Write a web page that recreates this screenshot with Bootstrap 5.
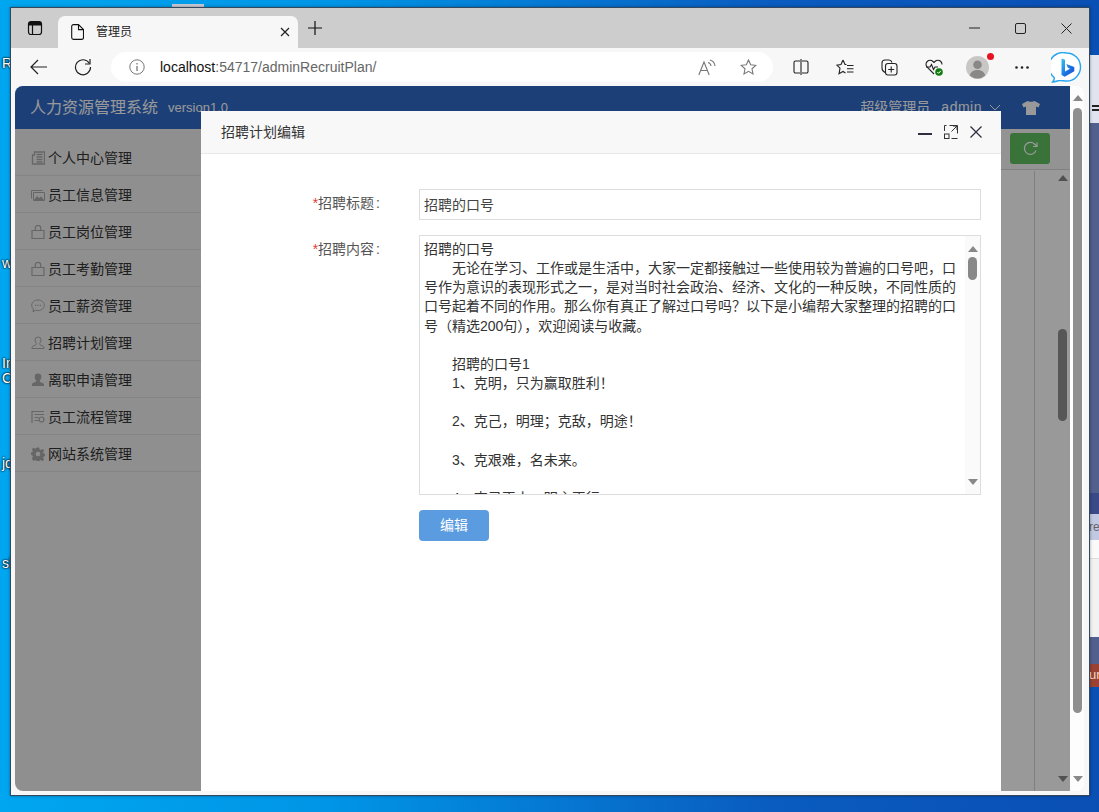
<!DOCTYPE html>
<html lang="zh-CN">
<head>
  <meta charset="UTF-8">
  <title>管理员</title>
  <link href="https://cdn.jsdelivr.net/npm/bootstrap@5.3.0/dist/css/bootstrap.min.css" rel="stylesheet">
  <style>
    html, body { height: 100%; }
    body {
      position: relative; overflow: hidden; width: 1099px; height: 812px;
      background: linear-gradient(90deg, #00a6f0 0, #0095e6 30%, #0a5cc0 70%, #0a4fb4 100%);
      font-family: "Liberation Sans", "Noto Sans CJK SC", sans-serif; font-size: 14px; color: #333;
    }
    svg { display: block; }

    /* desktop behind the window */
    .desk-label { position: absolute; left: 2px; color: #fff; font-size: 14px; line-height: 16px; text-shadow: 0 0 2px #000, 0 0 2px #000; }
    .desk-peek { position: absolute; left: 1089px; top: 55px; width: 10px; }
    .peek-a { height: 68px; background: #e0e4ee; padding: 50px 0 0 3px; }
    .peek-a i { display: block; width: 7px; height: 6px; border-top: 2px solid #222; border-bottom: 2px solid #222; }
    .peek-b { height: 370px; background: #52608f; }
    .peek-c { height: 21px; background: #3a4a88; }
    .peek-d { height: 26px; background: #c0c8e2; color: #666; font-size: 12px; line-height: 26px; overflow: hidden; }
    .peek-e { height: 19px; background: #fafafa; border-bottom: 1px solid #ddd; }
    .peek-f { height: 78px; background: #f2f2f2; }
    .peek-g { height: 27px; background: #52608f; }
    .peek-h { height: 23px; background: #9b4234; color: #f3d9c8; font-size: 13px; line-height: 22px; overflow: hidden; }
    .desk-strip { position: absolute; top: 4px; left: 172px; width: 32px; height: 4px; background: #c9c9d6; }

    /* browser window */
    .app-window {
      position: absolute; left: 10px; top: 7px; width: 1080px; height: 789px;
      border: 1px solid #33485e; background: #fff; box-shadow: 0 0 3px rgba(0,0,0,.35);
    }
    .tab-strip { height: 40px; background: #cdcdcd; }
    .strip-btn { width: 47px; height: 40px; }
    .strip-plus { width: 34px; height: 40px; }
    .page-tab { width: 240px; height: 32px; background: #f7f7f7; border-radius: 7px 7px 0 0; padding: 0 8px 0 13px; font-size: 12px; color: #222; }
    .page-tab span { margin-left: 12px; }
    .win-btn { width: 46px; height: 40px; }
    .tool-bar { height: 38px; background: #f7f7f7; padding-left: 6px; }
    .tool-btn { width: 44px; height: 38px; flex: none; }
    .tool-btn-r { width: 44.2px; height: 38px; flex: none; }
    .addr-pill { width: 662px; height: 30px; flex: none; margin: 0 6px 0 6px; background: #fff; border-radius: 15px; padding: 0 16px 0 18px; }
    .addr-text { margin-left: 15px; color: #666; }
    .addr-text b { font-weight: 400; color: #111; }
    .avatar-dot { position: absolute; right: 6px; top: 5px; width: 7px; height: 7px; border-radius: 50%; background: #e81123; }

    /* site inside the browser */
    .site-frame { height: 709px; background: #f7f7f7; padding: 0 5px 4px 4px; }
    .site-inner { height: 705px; background: #fff; border-radius: 8px; overflow: hidden; }
    .site-main { position: relative; width: 1055px; }
    .site-head { height: 44px; background: #2f69c9; color: #fff; padding: 0 30px 0 15px; }
    .site-title { font-size: 16px; }
    .site-ver { font-size: 13px; margin-left: 10px; }
    .site-user { margin-right: 7px; }
    .site-user b { font-weight: 400; margin-left: 11px; letter-spacing: .5px; }
    .site-user + svg { margin-right: 21px; }
    .side-menu { width: 200px; background: #efefef; padding-top: 10px; flex: none; }
    .side-item { height: 37px; border-bottom: 1px solid #dcdcdc; padding: 2px 3px 0 16px; color: #333; }
    .side-item span { margin-left: 3px; }
    .side-icon { width: 14px; height: 14px; flex: none; color: #aaa; }
    .side-item .side-chev { margin-left: auto; }
    .top-tools { height: 41px; background: #f5f5f5; border-bottom: 1px solid #d8d8d8; padding: 4px 20px 0 0; }
    .green-btn { width: 40px; height: 31px; padding: 0; background: #60c060; border: 0; border-radius: 3px; }
    .grid-area { height: 621px; background: linear-gradient(90deg, #e6e6e6, #fff 40%); }
    .grid-line { position: absolute; left: 1019px; top: 85px; bottom: 0; width: 1px; background: #d4d4d4; }
    .mini-bar { width: 9px; margin-right: 3px; padding: 5px 0 9px; }
    .mini-thumb { height: 92px; margin-top: 148px; background: #8f8f8f; border-radius: 5px; }
    .tri-up { width: 0; height: 0; margin: 0 auto; border: 5px solid transparent; border-top: 0; border-bottom: 6px solid #888; }
    .tri-down { width: 0; height: 0; margin: 0 auto; border: 5px solid transparent; border-bottom: 0; border-top: 6px solid #888; }
    .dim-layer { position: absolute; inset: 0; background: rgba(0,0,0,.4); }
    .page-bar { width: 14px; background: #fdfdfd; padding: 9px 2px 9px 3px; }
    .page-thumb { width: 9px; height: 605px; margin-top: 7px; background: #8f8f8f; border-radius: 5px; }

    /* dialog */
    .edit-dialog { position: absolute; left: 186px; top: 25px; width: 800px; bottom: 0; background: #fff; }
    .dlg-head { height: 43px; background: #f8f8f8; border-bottom: 1px solid #e9e9e9; padding: 0 19px 0 20px; font-size: 14px; color: #333; }
    .dlg-tools { gap: 12px; }
    .dlg-body { padding: 35px 20px 0 0; }
    .title-row { margin-bottom: 15px; }
    .field-label { width: 180px; flex: none; text-align: right; color: #555; line-height: 19px; }
    .title-row .field-label { margin-top: -3px; }
    .body-row .field-label { margin-top: 5px; }
    .field-label em { font-style: normal; color: #e4393c; }
    .field-label i { font-style: normal; margin-left: 2px; margin-right: 1px; }
    .field-box { margin-left: 38px; flex-grow: 1; }
    .title-input.form-control { height: 31px; padding: 0 4px 2px; border: 1px solid #ddd; border-radius: 0; font-size: 14px; color: #444; font-family: inherit; }
    .body-wrap { position: relative; height: 260px; }
    .body-input.form-control { height: 260px; padding: 4px; border: 1px solid #ddd; border-radius: 0; font-size: 14px; line-height: 19.15px; color: #333; font-family: inherit; overflow: hidden; resize: none; white-space: pre; }
    .text-bar { position: absolute; right: 1px; top: 1px; bottom: 1px; width: 15px; background: #fafafa; padding: 10px 3px 9px; }
    .text-thumb { width: 9px; height: 23px; margin-top: 5px; background: #888; border-radius: 5px; }
    .save-btn { width: 70px; height: 31px; margin-top: 15px; padding: 0; background: #5b9bdf; border: 0; border-radius: 4px; color: #fff; font-size: 14px; }
  </style>
</head>
<body>
  <svg width="0" height="0" class="position-absolute">
    <symbol id="i-bag" viewBox="0 0 14 14"><path d="M1 5.500h12V13.500H1zM4.300 5.500V3a2.700 2.700 0 0 1 5.400 0v2.500" fill="none" stroke="currentColor" stroke-width="1.200"/></symbol>
    <symbol id="i-chev" viewBox="0 0 12 7"><path d="M1 1l5 5 5-5" fill="none" stroke="currentColor" stroke-width="1"/></symbol>
  </svg>

  <div class="desk-strip"></div>
  <div class="desk-label" style="top:55px">R</div>
  <div class="desk-label" style="top:255px">wi</div>
  <div class="desk-label" style="top:355px">In</div>
  <div class="desk-label" style="top:370px">Co</div>
  <div class="desk-label" style="top:455px">jq</div>
  <div class="desk-label" style="top:555px">sk</div>

  <div class="desk-peek">
    <div class="peek-a"><i></i></div>
    <div class="peek-b"></div>
    <div class="peek-c"></div>
    <div class="peek-d">rea</div>
    <div class="peek-e"></div>
    <div class="peek-f"></div>
    <div class="peek-g"></div>
    <div class="peek-h">ur</div>
  </div>

  <div class="app-window d-flex flex-column">
    <!-- tabs -->
    <div class="tab-strip d-flex align-items-end">
      <div class="strip-btn d-flex align-items-center justify-content-center">
        <svg width="16" height="16" viewBox="0 0 16 16" fill="none" stroke="#111" stroke-width="1.200"><rect x="1.500" y="1.500" width="13" height="13" rx="2.500"/><path d="M5.500 5v9.500M1.500 5h13" /><path d="M2 2h12v3H2z" fill="#111" stroke="none"/></svg>
      </div>
      <div class="page-tab d-flex align-items-center">
        <svg width="13" height="16" viewBox="0 0 13 16" fill="none" stroke="#111" stroke-width="1.100"><path d="M2.500.6h5l5 5v8a1.800 1.800 0 0 1-1.800 1.800H2.500A1.800 1.800 0 0 1 .7 13.600V2.400A1.800 1.800 0 0 1 2.500.6zM7.500.6v5h5"/></svg>
        <span class="flex-grow-1">管理员</span>
        <svg width="10" height="10" viewBox="0 0 10 10" stroke="#222" stroke-width="1.200"><path d="M1 1l8 8M9 1l-8 8"/></svg>
      </div>
      <div class="strip-plus d-flex align-items-center justify-content-center">
        <svg width="14" height="14" viewBox="0 0 14 14" stroke="#111" stroke-width="1.200"><path d="M7 0v14M0 7h14"/></svg>
      </div>
      <div class="ms-auto d-flex">
        <div class="win-btn d-flex align-items-center justify-content-center"><svg width="11" height="2" viewBox="0 0 11 2" stroke="#222"><path d="M0 1h11"/></svg></div>
        <div class="win-btn d-flex align-items-center justify-content-center"><svg width="11" height="11" viewBox="0 0 11 11" fill="none" stroke="#222"><rect x=".5" y=".5" width="10" height="10" rx="1.500"/></svg></div>
        <div class="win-btn d-flex align-items-center justify-content-center"><svg width="11" height="11" viewBox="0 0 11 11" stroke="#222"><path d="M.5.5l10 10M10.500.5l-10 10"/></svg></div>
      </div>
    </div>

    <!-- address bar -->
    <div class="tool-bar d-flex align-items-center">
      <div class="tool-btn d-flex align-items-center justify-content-center">
        <svg width="18" height="16" viewBox="0 0 18 16" fill="none" stroke="#222" stroke-width="1.200"><path d="M17 8H1M8 1L1 8l7 7"/></svg>
      </div>
      <div class="tool-btn d-flex align-items-center justify-content-center">
        <svg width="18" height="18" viewBox="0 0 18 18" fill="none" stroke="#222" stroke-width="1.200"><path d="M15.500 5.500A7.500 7.500 0 1 0 16.500 9"/><path d="M16 1v5h-5"/></svg>
      </div>
      <div class="addr-pill d-flex align-items-center">
        <svg width="16" height="16" viewBox="0 0 16 16" fill="none" stroke="#777"><circle cx="8" cy="8" r="7.200"/><path d="M8 7v5M8 4v1.500" stroke-width="1.300"/></svg>
        <div class="addr-text"><b>localhost</b>:54717/adminRecruitPlan/</div>
        <svg class="ms-auto" width="18" height="17" viewBox="0 0 18 17" fill="none" stroke="#777" stroke-width="1.100"><path d="M.8 16L6 3l5.200 13M2.500 11.500h7"/><path d="M10 3.500a4 4 0 0 1 3 3.500M12 1a7 7 0 0 1 5 6"/></svg>
        <svg class="ms-4" width="17" height="16" viewBox="0 0 17 16" fill="none" stroke="#777" stroke-width="1.100"><path d="M8.500 1l2.200 4.700 5.100.6-3.800 3.500 1 5.100-4.500-2.600-4.500 2.600 1-5.100L1.200 6.300l5.100-.6z"/></svg>
      </div>
      <div class="tool-btn-r d-flex align-items-center justify-content-center">
        <svg width="16" height="16" viewBox="0 0 16 16" fill="none" stroke="#222" stroke-width="1.100"><path d="M7 2H2.500A1.500 1.500 0 0 0 1 3.500v9A1.500 1.500 0 0 0 2.500 14H7M9 2h4.500A1.500 1.500 0 0 1 15 3.500v9a1.500 1.500 0 0 1-1.500 1.500H9M8 0v16"/></svg>
      </div>
      <div class="tool-btn-r d-flex align-items-center justify-content-center">
        <svg width="18" height="16" viewBox="0 0 18 16" fill="none" stroke="#222" stroke-width="1.100"><path d="M7 1l2 4.500h1.500M7 1L5 5.500.8 6.100l3.200 3-1 5.700L7 12.500l2.500 1.500"/><path d="M11 6.500h6.500M11 9.800h6.500M11 13h6.500"/></svg>
      </div>
      <div class="tool-btn-r d-flex align-items-center justify-content-center">
        <svg width="17" height="17" viewBox="0 0 17 17" fill="none" stroke="#222" stroke-width="1.100"><rect x="4.500" y="4.500" width="11.500" height="11.500" rx="2.500"/><path d="M10.200 7.500v6M7.200 10.500h6M4 13.500C2 12.500 1 11 1 9V4a3 3 0 0 1 3-3h4c1.500 0 2.500 1 3 2.500"/></svg>
      </div>
      <div class="tool-btn-r position-relative d-flex align-items-center justify-content-center">
        <svg width="18" height="17" viewBox="0 0 18 17" fill="none"><path d="M9 15L2.200 8.200a4 4 0 0 1 0-5.700 4.200 4.200 0 0 1 5.800 0l1 1 1-1a4.200 4.200 0 0 1 5.800 0 4 4 0 0 1 1.200 3" stroke="#222" stroke-width="1.100"/><path d="M1 8h4l1.500-2.500 2 5 1.500-2.500h3" stroke="#222" stroke-width="1.100"/><circle cx="14" cy="13" r="3.800" fill="#107c10"/><path d="M12.300 13l1.300 1.300 2.200-2.500" stroke="#fff"/></svg>
      </div>
      <div class="tool-btn-r position-relative d-flex align-items-center justify-content-center">
        <svg width="23" height="23" viewBox="0 0 23 23"><circle cx="11.500" cy="11.500" r="11.500" fill="#c9c7c5"/><circle cx="11.500" cy="8.800" r="4.300" fill="#8a8886"/><path d="M3.800 19.500c1-4 4-5.500 7.700-5.500s6.700 1.500 7.700 5.500a11.500 11.500 0 0 1-15.400 0z" fill="#8a8886"/></svg>
        <div class="avatar-dot"></div>
      </div>
      <div class="tool-btn-r d-flex align-items-center justify-content-center">
        <svg width="14" height="3" viewBox="0 0 14 3" fill="#222"><circle cx="1.500" cy="1.500" r="1.300"/><circle cx="7" cy="1.500" r="1.300"/><circle cx="12.500" cy="1.500" r="1.300"/></svg>
      </div>
      <div class="tool-btn-r d-flex align-items-center justify-content-center">
        <svg width="31" height="31" viewBox="0 0 31 31">
          <defs><linearGradient id="bing-b" x1="0" y1="0" x2="1" y2="1"><stop offset="0" stop-color="#36c3f2"/><stop offset=".6" stop-color="#1b6fe0"/><stop offset="1" stop-color="#1a4fd0"/></linearGradient></defs>
          <path d="M15.500 1a14 14 0 0 1 0 28c-3 0-6-.7-8.500-.2-1.500.3-3.500 1.400-5.500 1.200 1.400-1.300 2-3 1.700-4.500A14 14 0 0 1 15.500 1z" fill="#fff" stroke="#27a5ef" stroke-width="1.400"/>
          <path d="M10.500 6.500l3.500 1.300v11.700l5-2.800-2.300-1.100-1.400-3.500 8 2.900v4.300l-9.600 5.500-3.200-1.800z" fill="url(#bing-b)"/>
        </svg>
      </div>
    </div>

    <!-- site -->
    <div class="site-frame">
      <div class="site-inner d-flex">
        <div class="site-main d-flex flex-column">
          <div class="site-head d-flex align-items-center">
            <div class="site-title">人力资源管理系统</div>
            <div class="site-ver">version1.0</div>
            <div class="ms-auto site-user">超级管理员<b>admin</b></div>
            <svg width="12" height="7" color="#fff"><use href="#i-chev"/></svg>
            <svg width="18" height="14" viewBox="0 0 18 14" fill="#fff"><path d="M5.500 0C7 1 11 1 12.500 0L18 3l-1.500 3.500-2.500-1V14H4V5.500L1.500 6.500 0 3z"/></svg>
          </div>
          <div class="d-flex flex-grow-1">
            <div class="side-menu">
              <div class="side-item d-flex align-items-center">
                <svg class="side-icon" viewBox="0 0 14 14" fill="none" stroke="currentColor" stroke-width="1.300"><path d="M3.500 1h10v12h-12V4h2zM5.500 3.500h6M5.500 6h6M5.500 8.500h6M5.500 11h6"/></svg>
                <span>个人中心管理</span>
                <svg class="side-chev" width="12" height="7" color="#b5b5b5"><use href="#i-chev"/></svg>
              </div>
              <div class="side-item d-flex align-items-center">
                <svg class="side-icon" viewBox="0 0 14 14" fill="none" stroke="currentColor"><path d="M.5 2.500h11M.5 2.500v8M2.500 4.500h11v8h-11z"/><path d="M3 12l3-4 2 2 2-1.500 3 3.500z" fill="currentColor" stroke="none"/></svg>
                <span>员工信息管理</span>
                <svg class="side-chev" width="12" height="7" color="#b5b5b5"><use href="#i-chev"/></svg>
              </div>
              <div class="side-item d-flex align-items-center">
                <svg class="side-icon"><use href="#i-bag"/></svg>
                <span>员工岗位管理</span>
                <svg class="side-chev" width="12" height="7" color="#b5b5b5"><use href="#i-chev"/></svg>
              </div>
              <div class="side-item d-flex align-items-center">
                <svg class="side-icon"><use href="#i-bag"/></svg>
                <span>员工考勤管理</span>
                <svg class="side-chev" width="12" height="7" color="#b5b5b5"><use href="#i-chev"/></svg>
              </div>
              <div class="side-item d-flex align-items-center">
                <svg class="side-icon" viewBox="0 0 14 14" fill="none" stroke="currentColor"><path d="M7 1c3.500 0 6.300 2.300 6.300 5.300S10.500 11.600 7 11.600c-.9 0-1.700-.1-2.400-.4L2 12.800l.4-3C1.300 8.900.7 7.700.7 6.300.7 3.300 3.500 1 7 1z"/><path d="M4 6.300h1.200M6.400 6.300h1.200M8.800 6.300H10" stroke-width="1.300"/></svg>
                <span>员工薪资管理</span>
                <svg class="side-chev" width="12" height="7" color="#b5b5b5"><use href="#i-chev"/></svg>
              </div>
              <div class="side-item d-flex align-items-center">
                <svg class="side-icon" viewBox="0 0 14 14" fill="none" stroke="currentColor"><path d="M7 1a3 3 0 0 1 3 3c0 1.500-.6 2.500-1.300 3.300-.3.900 0 1.500 1 1.900 1.500.6 3.300 1 3.300 2.300v1H1v-1c0-1.300 1.800-1.700 3.300-2.300 1-.4 1.300-1 1-1.900C4.600 6.500 4 5.500 4 4a3 3 0 0 1 3-3z"/></svg>
                <span>招聘计划管理</span>
                <svg class="side-chev" width="12" height="7" color="#b5b5b5"><use href="#i-chev"/></svg>
              </div>
              <div class="side-item d-flex align-items-center">
                <svg class="side-icon" viewBox="0 0 14 14" fill="currentColor"><path d="M7 .5a3.300 3.300 0 0 1 3.300 3.300c0 1.700-.6 2.900-1.500 3.700-.3.900 0 1.400 1 1.800 1.500.6 3.200 1 3.200 2.200v1.500H1V11.300c0-1.200 1.700-1.600 3.200-2.200 1-.4 1.300-.9 1-1.800C4.300 6.700 3.700 5.500 3.700 3.800A3.300 3.300 0 0 1 7 .5z"/></svg>
                <span>离职申请管理</span>
                <svg class="side-chev" width="12" height="7" color="#b5b5b5"><use href="#i-chev"/></svg>
              </div>
              <div class="side-item d-flex align-items-center">
                <svg class="side-icon" viewBox="0 0 14 14" fill="none" stroke="currentColor" stroke-width="1.200"><path d="M1 1v12M1 1.500h12M3.500 4.500H13M3.500 7.500h4M3.500 10.500h4"/><circle cx="10.500" cy="9.500" r="2.500"/></svg>
                <span>员工流程管理</span>
                <svg class="side-chev" width="12" height="7" color="#b5b5b5"><use href="#i-chev"/></svg>
              </div>
              <div class="side-item d-flex align-items-center">
                <svg class="side-icon" viewBox="0 0 14 14" fill="currentColor"><path fill-rule="evenodd" d="M5.800.5h2.400l.4 1.900 1.300.6 1.700-1 1.500 1.600-1 1.600.6 1.300 1.800.4v2.300l-1.800.4-.6 1.300 1 1.700-1.600 1.500-1.600-1-1.300.6-.4 1.800H5.800l-.4-1.800-1.300-.6-1.700 1L.9 11.200l1-1.600-.6-1.300L-.5 7.900V5.600l1.800-.4.600-1.300-1-1.700L2.500.7l1.600 1 1.300-.6zM7 4.700a2.300 2.300 0 1 0 0 4.600 2.300 2.300 0 0 0 0-4.600z"/></svg>
                <span>网站系统管理</span>
                <svg class="side-chev" width="12" height="7" color="#b5b5b5"><use href="#i-chev"/></svg>
              </div>
            </div>
            <div class="flex-grow-1 d-flex flex-column">
              <div class="top-tools d-flex justify-content-end">
                <button class="green-btn btn d-flex align-items-center justify-content-center" type="button">
                  <svg width="15" height="15" viewBox="0 0 15 15" fill="none" stroke="#fff" stroke-width="1.200"><path d="M13 9.500A6 6 0 1 1 11.500 3l2 2M14 1.500V5.500h-4"/></svg>
                </button>
              </div>
              <div class="grid-area d-flex justify-content-end">
                <div class="mini-bar d-flex flex-column">
                  <div class="tri-up"></div>
                  <div class="mini-thumb"></div>
                  <div class="tri-down mt-auto"></div>
                </div>
              </div>
            </div>
          </div>
          <div class="grid-line"></div>
          <div class="dim-layer"></div>

          <div class="edit-dialog">
            <div class="dlg-head d-flex align-items-center justify-content-between">
              <div>招聘计划编辑</div>
              <div class="dlg-tools d-flex align-items-center">
                <svg width="14" height="14" viewBox="0 0 14 14" stroke="#2f2f3f" stroke-width="2"><path d="M0 9h14"/></svg>
                <svg width="14" height="14" viewBox="0 0 14 14" fill="none" stroke="#333"><path d="M5.500.5h8v8M13.500 13.500h-6M.5 6V.5h2M13 1L7.500 6.500M9 1h4v4"/><rect x=".5" y="9" width="4.500" height="4.500"/></svg>
                <svg width="12" height="12" viewBox="0 0 12 12" stroke="#2f2f3f" stroke-width="1.300"><path d="M.5.5l11 11M11.500.5l-11 11"/></svg>
              </div>
            </div>
            <div class="dlg-body">
              <div class="title-row d-flex align-items-center">
                <label class="field-label"><em>*</em>招聘标题<i>:</i></label>
                <div class="field-box"><input type="text" class="form-control title-input" value="招聘的口号"></div>
              </div>
              <div class="body-row d-flex">
                <label class="field-label"><em>*</em>招聘内容<i>:</i></label>
                <div class="field-box">
                  <div class="body-wrap">
                    <textarea class="form-control body-input" wrap="off">招聘的口号
　　无论在学习、工作或是生活中，大家一定都接触过一些使用较为普遍的口号吧，口
号作为意识的表现形式之一，是对当时社会政治、经济、文化的一种反映，不同性质的
口号起着不同的作用。那么你有真正了解过口号吗？以下是小编帮大家整理的招聘的口
号（精选200句），欢迎阅读与收藏。

　　招聘的口号1
　　1、克明，只为赢取胜利！

　　2、克己，明理；克敌，明途！

　　3、克艰难，名未来。

　　4、克己正人，明主正行</textarea>
                    <div class="text-bar d-flex flex-column">
                      <div class="tri-up"></div>
                      <div class="text-thumb"></div>
                      <div class="tri-down mt-auto"></div>
                    </div>
                  </div>
                  <button class="btn save-btn" type="button">编辑</button>
                </div>
              </div>
            </div>
          </div>
        </div>
        <div class="page-bar d-flex flex-column">
          <div class="tri-up"></div>
          <div class="page-thumb"></div>
          <div class="tri-down mt-auto"></div>
        </div>
      </div>
    </div>
  </div>
</body>
</html>
